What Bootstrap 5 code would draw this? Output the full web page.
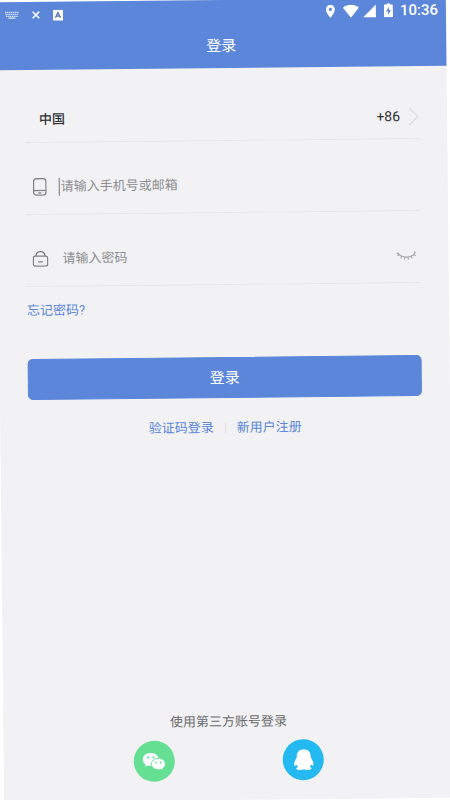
<!DOCTYPE html>
<html lang="zh-CN">
<head>
<meta charset="utf-8">
<meta name="viewport" content="width=device-width, initial-scale=1">
<title>登录</title>
<link href="https://cdn.jsdelivr.net/npm/bootstrap@5.3.0/dist/css/bootstrap.min.css" rel="stylesheet">
<style>
:root { --brand: #5b86da; --page: #f2f2f5; --muted: #8e8e91; }
html, body { overflow: hidden; }
body { background: #fff; font-family: Roboto, "Noto Sans CJK SC", sans-serif; font-size: 13px; line-height: 20px; color: #303034; }
svg { display: block; flex: none; }
.screen { min-height: 100vh; background: var(--page); transform: rotate(-0.6deg); }
.app-header { background: var(--brand); height: 68px; }
.status-bar { height: 24px; padding: 0 8px 0 9px; }
.notices { gap: 13px; padding-top: 2px; }
.clock { font-size: 15px; font-weight: 500; line-height: 24px; margin-left: 7px; }
.app-title { font-size: 15px; line-height: 44px; font-weight: 400; }
.page-pad { padding: 0 28px; }
.field-row { height: 72px; padding: 17px 0 0; border-bottom: 1px solid #e6e6e9; }
.country { width: 100%; height: 73px; padding: 28px 0 0 14px; background: none; border: 0; border-bottom: 1px solid #e6e6e9; color: inherit; }
.country-name { font-weight: 500; }
.dial-code { font-size: 14px; }
.field-icon { width: 28px; }
.field-input { background: none; border: 0; padding: 0; outline: 0; min-width: 0; color: #303034; }
.field-input::placeholder { color: var(--muted); opacity: 1; }
.caret { width: 1px; height: 18px; margin: 0 1px 0 5px; background: #77777a; }
.brand-link { color: var(--brand); text-decoration: none; }
.forgot { padding-top: 14px; }
.login-btn { --bs-btn-bg: var(--brand); --bs-btn-border-color: var(--brand); --bs-btn-color: #fff; --bs-btn-hover-bg: #4e79cf; --bs-btn-hover-color: #fff; --bs-btn-border-radius: 5px; height: 41px; font-size: 15px; line-height: 20px; margin-top: 38px; }
.alt-links { gap: 11px; padding-top: 20px; }
.sep { width: 1px; height: 10px; background: #dddde1; }
.third-party { color: #6b6b6e; padding-bottom: 19px; }
.round-btn { width: 41px; height: 41px; border: 0; }
.wechat { background: #65e093; }
.qq { background: #24b9f0; }
</style>
</head>
<body>
<div class="screen d-flex flex-column">
  <header class="app-header text-white">
    <div class="status-bar d-flex align-items-center justify-content-between">
      <div class="notices d-flex align-items-center">
        <svg width="14" height="8" viewBox="0 0 14 8" fill="none" stroke="#fff" stroke-opacity=".75"><path d="M0 1.2h14M.5 3.2h13M1 5.2h12" stroke-width="1.3" stroke-dasharray="1.4 .5"/><path d="M3.500 7h7" stroke-width="1.3"/></svg>
        <svg width="8" height="8" viewBox="0 0 8 8" stroke="#fff" stroke-width="1.5"><path d="M.7.7l6.600 6.600M7.300.7L.7 7.300"/></svg>
        <svg width="10" height="11" viewBox="0 0 10 11"><rect width="10" height="11" rx=".7" fill="#fff"/><path d="M2.500 8L5 2.700 7.500 8M3.400 6.300h3.200" fill="none" stroke="#5b6fa8" stroke-width="1.300"/></svg>
      </div>
      <div class="d-flex align-items-center">
        <svg width="9" height="13" viewBox="0 0 9 13"><path fill="#fff" fill-rule="evenodd" d="M4.500 0A4.500 4.500 0 0 0 0 4.500C0 7.800 4.500 13 4.500 13S9 7.800 9 4.500A4.500 4.500 0 0 0 4.500 0zm0 2.900a1.600 1.600 0 1 1 0 3.200 1.600 1.600 0 0 1 0-3.200z"/></svg>
        <svg class="ms-2" width="16" height="13" viewBox="0 0 16 13"><path fill="#fff" d="M0 2.900C4.600-.8 11.400-.8 16 2.900L8 13z"/></svg>
        <svg class="ms-1" width="13" height="13" viewBox="0 0 13 13"><path fill="#fff" d="M13 0v13H0z"/></svg>
        <svg class="ms-2" width="9" height="14" viewBox="0 0 9 14"><path fill="#fff" d="M3 0h3v1.300h2.300q.7 0 .7.700v11.300q0 .7-.7.700H.7q-.7 0-.7-.7V2q0-.7.7-.7H3z"/><path fill="#5b86da" d="M5.300 3.200L2 8.300h2.200v3.400L7 6.800H4.900z"/></svg>
        <span class="clock">10:36</span>
      </div>
    </div>
    <h1 class="app-title text-center m-0">登录</h1>
  </header>

  <main class="page-pad flex-grow-1">
    <form onsubmit="return false">
      <button type="button" class="country d-flex align-items-center">
        <span class="country-name me-auto">中国</span>
        <span class="dial-code me-1">+86</span>
        <svg class="ms-1" width="11" height="19" viewBox="0 0 11 19" fill="none" stroke="#dedee1" stroke-width="1.500"><path d="M1 1l9 8.500L1 18"/></svg>
      </button>
      <div class="field-row d-flex align-items-center">
        <label class="field-icon d-flex justify-content-center" for="account" aria-label="手机号或邮箱">
          <svg width="14" height="18" viewBox="0 0 14 18" fill="none" stroke="#818184" stroke-width="1.300"><rect x=".8" y=".8" width="12.400" height="16.400" rx="2.800"/><path d="M1 12.600h12"/><path d="M5.500 15h3"/></svg>
        </label>
        <span class="caret"></span>
        <input class="field-input flex-grow-1" id="account" type="text" placeholder="请输入手机号或邮箱">
      </div>
      <div class="field-row d-flex align-items-center">
        <label class="field-icon d-flex justify-content-center" for="password" aria-label="密码">
          <svg width="16" height="16" viewBox="0 0 16 16" fill="none" stroke="#818184" stroke-width="1.300"><rect x=".8" y="5.200" width="14.400" height="10" rx="2"/><path d="M3.400 5.200C3.600 2.500 5.500.8 8 .8s4.400 1.700 4.600 4.400M5.600 11h4.800"/></svg>
        </label>
        <input class="field-input flex-grow-1 ms-2" id="password" type="password" placeholder="请输入密码">
        <button type="button" class="btn border-0 p-0 me-1" aria-label="显示密码">
          <svg width="20" height="9" viewBox="0 0 20 9" fill="none" stroke="#aaaaad" stroke-width="1.200"><path d="M1 1.500C5.500 7.600 14.500 7.600 19 1.500M3 3.600L.8 4.400M5.300 5.200L4.200 7.300M8.300 6.100L8 8.500M11.500 6.100l.4 2.400M14.600 5.200l1.100 2.100M16.900 3.700l2.300.9M1 1.500L.4 3M18.800 1.500L17.800.4"/></svg>
        </button>
      </div>
      <div class="forgot"><a class="brand-link" href="#">忘记密码?</a></div>
      <button type="submit" class="btn login-btn w-100 py-0">登录</button>
      <div class="alt-links d-flex justify-content-center align-items-center">
        <a class="brand-link" href="#">验证码登录</a>
        <span class="sep"></span>
        <a class="brand-link" href="#">新用户注册</a>
      </div>
    </form>
  </main>

  <footer class="third-party">
    <p class="text-center mb-2">使用第三方账号登录</p>
    <div class="row g-0 justify-content-center">
      <div class="col-4 d-flex justify-content-center">
        <button type="button" class="round-btn wechat rounded-circle p-0 d-flex align-items-center justify-content-center" aria-label="微信">
          <svg width="23" height="18" viewBox="0 0 23 18"><path fill="#fff" d="M8 0C3.500 0 0 2.900 0 6.700c0 2.100 1.100 3.900 2.900 5.100L2.200 14l2.800-1.300c1 .3 2 .5 3 .5 4.500 0 8-2.900 8-6.500S12.500 0 8 0z"/><path fill="#fff" stroke="#65e093" stroke-width=".9" d="M15.600 5.600c-4 0-7 2.500-7 5.700s3 5.700 7 5.700c.9 0 1.700-.1 2.500-.4l2.300 1.200-.6-2c1.700-1 2.800-2.700 2.800-4.500 0-3.200-3.100-5.700-7-5.700z"/><g fill="#65e093"><circle cx="5.400" cy="4.600" r="1.100"/><circle cx="10.800" cy="4.600" r="1.100"/><circle cx="13.300" cy="9.800" r=".9"/><circle cx="17.900" cy="9.800" r=".9"/></g></svg>
        </button>
      </div>
      <div class="col-4 d-flex justify-content-center">
        <button type="button" class="round-btn qq rounded-circle p-0 d-flex align-items-center justify-content-center" aria-label="QQ">
          <svg width="20" height="21" viewBox="0 0 20 21"><path fill="#fff" d="M10 0C5.800 0 3 2.900 3 6.600c0 .9 0 1.500-.2 2.100C1.300 10.900.3 13.300.3 15.300c0 1 .4 1.400 1 1.100.5-.2 1-.6 1.600-1 .3.900.6 1.500 1.200 2.300-1.200.4-1.600 1-1.600 1.700 0 1 1.600 1.400 3.800 1.400 1.700 0 3-.3 3.700-.8.7.5 2 .8 3.700.8 2.200 0 3.800-.4 3.800-1.400 0-.7-.4-1.300-1.600-1.700.6-.8.900-1.400 1.200-2.300.6.400 1.100.8 1.600 1 .6.300 1-.1 1-1.100 0-2-1-4.400-2.500-6.600-.2-.6-.2-1.200-.2-2.100C17 2.900 14.200 0 10 0z"/></svg>
        </button>
      </div>
    </div>
  </footer>
</div>
<script src="https://cdn.jsdelivr.net/npm/bootstrap@5.3.0/dist/js/bootstrap.bundle.min.js"></script>
</body>
</html>
